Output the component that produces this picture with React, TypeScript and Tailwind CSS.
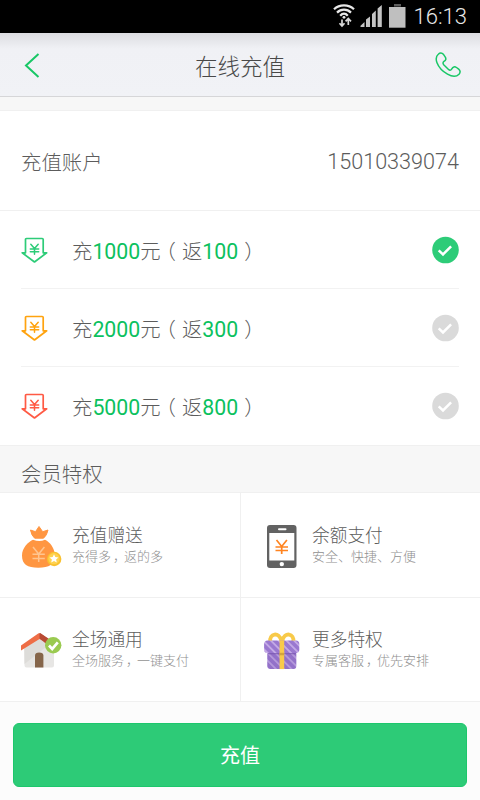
import type { ReactNode } from 'react';

interface Plan {
  amount: string;
  bonus: string;
  color: string;
}

const plans: Plan[] = [
  { amount: '1000', bonus: '100', color: '#2dcc78' },
  { amount: '2000', bonus: '300', color: '#ffa30f' },
  { amount: '5000', bonus: '800', color: '#ff5a44' },
];

// Full-width comma, centred in its cell
const Comma = () => <span className="pr-[4.500px] pl-[2px] [font-feature-settings:'halt']">，</span>;

const Amount = ({ children }: { children: ReactNode }) => (
  <span className="font-[Roboto,sans-serif] text-[21.3px] font-normal text-[#0bc15e]">{children}</span>
);

const StatusBar = () => (
  <div className="flex h-[33px] items-center justify-end bg-black pr-[13px]">
    <svg width="78" height="33" viewBox="330 0 78 33" fill="none">
      <g stroke="#e8e8e8" strokeWidth="2.200">
        <path d="M334 9.200C339.500 4 348.500 4 354 9.200" />
        <path d="M337 12.600C341 8.600 347 8.600 351 12.600" />
        <path d="M340.200 15.700C342.600 13 345.400 13 347.800 15.700" />
      </g>
      <circle cx="344" cy="17.300" r="1.400" fill="#e8e8e8" />
      <path d="M342 19.500v6.500M339.500 23.200l2.500 2.800 2.500-2.800M348.300 25v-6.500M345.600 21.300l2.700-2.800 2.700 2.800" stroke="#d8d8d8" strokeWidth="1.700" />
      <path d="M360.500 27v-1.200L364.500 22v5zM366 27v-7.500l4-3V27zM372 27V14l3.800-3.500V27zM377.600 27V8.600l4.200-3.500V27z" fill="#c4c4c4" />
      <path d="M394 4h7v2.500h-7z" fill="#5c5c5c" />
      <path d="M389 7h16.500v20.700H389z" fill="#bfbfbf" />
    </svg>
    <span className="ml-[6px] font-[Roboto,sans-serif] text-[22px] font-light leading-[33px] text-[#e8e8e8]">16:13</span>
  </div>
);

const RechargeIcon = ({ color }: { color: string }) => (
  <svg width="27" height="27" viewBox="0 0 27 27" fill="none" stroke={color} strokeLinejoin="round" strokeLinecap="round">
    <path d="M4.500 15.800V2.500q0-1 1-1h15.700q1 0 1 1v13.300h3.500L13.500 25 1.200 15.800z" strokeWidth="1.700" />
    <path d="M9.800 7.200l3.700 4.400 3.700-4.400M9.300 12h8.400M9.300 14.800h8.400M13.500 12v5.200" strokeWidth="1.500" />
  </svg>
);

const CheckCircle = ({ active }: { active: boolean }) => (
  <svg width="28" height="28" viewBox="0 0 28 28" fill="none">
    <circle cx="14.500" cy="14" r="13.300" fill={active ? '#2dcc78' : '#dadada'} />
    <path d="M7.700 14.300l4.300 4.100 8.100-8.100" stroke="#fff" strokeWidth="2.500" />
  </svg>
);

const MoneyBagIcon = () => (
  <svg width="42" height="44" viewBox="0 0 42 44">
    <path d="M9.500 5l5 1.700L18 1.500l3.700 5.200L27 5q-1.200 5.700-4.500 8.200h-8.800Q10.500 10.700 9.500 5z" fill="#ff9641" stroke="#ff9641" strokeLinejoin="round" />
    <path d="M12 14.700q6.500 2.500 12 0c5 2.300 9.800 8.500 9.800 15.800 0 9-5.500 12.200-16.500 12.200S1 39.500 1 30.500c0-7.300 5.800-13.500 11-15.800z" fill="#ff9641" />
    <path d="M12 22l5.700 7 5.700-7M11.500 29.300h12.300M11.500 33.500h12.300M17.700 29v8" fill="none" stroke="#ffc58f" strokeWidth="1.500" />
    <circle cx="33.200" cy="34" r="7.200" fill="#f9c12f" />
    <circle cx="33" cy="33.700" r="5.600" fill="#ffd24f" />
    <path d="M33 29.200l1.300 2.900 3.200.3-2.400 2.100.7 3.100-2.800-1.600-2.800 1.600.7-3.100-2.400-2.100 3.200-.3z" fill="#fff" />
  </svg>
);

const PhonePayIcon = () => (
  <svg width="42" height="44" viewBox="0 .5 42 44">
    <rect x="6" y=".5" width="29.500" height="43" rx="3" fill="#626262" />
    <path d="M8.300 8.500h25V36h-25z" fill="#fff" />
    <rect x="17" y="3.800" width="8.500" height="2" rx="1" fill="#fff" />
    <circle cx="20.800" cy="39.600" r="2.200" fill="#fff" />
    <path d="M15.500 15.500l5.200 6.500 5.200-6.500M14.500 22.500h12.500M14.500 26h12.500M20.700 22v7.500" fill="none" stroke="#ff8420" strokeWidth="1.700" />
  </svg>
);

const HouseIcon = () => (
  <svg width="42" height="44" viewBox="0 0 42 44">
    <path d="M3 19L18.500 7 33 18v18.500q0 2-2 2H5.500q-2 0-2-2z" fill="#e7e6e4" />
    <path d="M3.500 19L18.500 8l9 8L3.500 35z" fill="#dddcd9" />
    <path d="M18.500 6.500L37 21v-5L19.200 4z" fill="#b94a34" />
    <path d="M0 16.500V21.500L18.500 10l5 2.500-5-8.500q-.7 0-1.300.6z" fill="#ee6d46" />
    <path d="M18.500 4v5.500L28 17l3-4.500z" fill="#b94a34" />
    <path d="M14 38.500V26.500q0-3 4.200-3t4.200 3v12z" fill="#85654a" />
    <circle cx="32.200" cy="16.200" r="8.200" fill="#9aca50" />
    <path d="M28 16.500l3.200 3.400 5.600-6.500" fill="none" stroke="#fff" strokeWidth="2.700" />
  </svg>
);

const GiftIcon = () => (
  <svg width="42" height="44" viewBox=".2 -2.800 42 44">
    <defs>
      <pattern id="ribbon" width="5.500" height="5.500" patternUnits="userSpaceOnUse" patternTransform="rotate(-45)">
        <path d="M0 0h5.500v5.500H0z" fill="#9a78d0" />
        <path d="M0 0h1.800v5.500H0z" fill="#c4aae6" />
      </pattern>
    </defs>
    <g fill="none" stroke="#f8ca49" strokeWidth="3.800">
      <path d="M9.500 10C8 1.500 18.500-.5 20.500 9" />
      <path d="M21.500 9C23.500-.5 34 1.500 32.500 10" />
    </g>
    <rect x="6.500" y="19" width="29" height="18.300" rx="3" fill="url(#ribbon)" />
    <rect x="6.500" y="19" width="29" height="18.300" rx="3" fill="#7654ad" opacity=".2" />
    <path d="M7 20h28v2.500H7z" fill="#7654ad" opacity=".65" />
    <rect x="3.300" y="8.700" width="35.200" height="12.500" rx="3.500" fill="url(#ribbon)" />
    <path d="M18.800 8.500h4.600V37.300h-4.600z" fill="#f9ca4a" />
    <path d="M18.800 21h4.600v2.500h-4.600z" fill="#d3a33c" />
  </svg>
);

const benefits = [
  { title: '充值赠送', detail: <>充得多<Comma />返的多</>, icon: <MoneyBagIcon /> },
  { title: '余额支付', detail: <>安全、快捷、方便</>, icon: <PhonePayIcon /> },
  { title: '全场通用', detail: <>全场服务<Comma />一键支付</>, icon: <HouseIcon /> },
  { title: '更多特权', detail: <>专属客服<Comma />优先安排</>, icon: <GiftIcon /> },
];

export default function App() {
  return (
    <div
      lang="zh-CN"
      className="flex h-[800px] w-[480px] flex-col overflow-hidden bg-[#fcfcfc] font-['Noto_Sans_CJK_SC',sans-serif] font-light text-[#5c5c5c]"
    >
      <StatusBar />

      <header className="flex h-16 items-center justify-between border-b border-[#d6d6d8] bg-linear-to-b from-[#dcdde1] via-[#f0f1f5] via-25% to-[#f1f2f6] pr-[18px] pl-[24px]">
        <svg width="22" height="30" viewBox="0 0 22 30" fill="none">
          <path d="M14.500 4L2 15.500 14.500 27" stroke="#18c766" strokeWidth="2" />
        </svg>
        <h1 className="pt-px text-[22.5px] leading-none text-[#484848]">在线充值</h1>
        <svg width="28" height="28" viewBox="0 0 28 28" fill="none" stroke="#18c766" strokeWidth="1.500" strokeLinejoin="round">
          <path d="M4.300 3.200C6 1.500 8 1.600 9.300 3.200L11.300 6.200C12.400 8 11.700 9.400 10.300 10.200 8.800 11.300 8.600 12.300 9.700 13.700L14.800 18.700C16 19.700 17 19.200 17.800 17.800 19 15.700 20.700 15.300 22.500 16.500L24.700 18.200C26.500 19.700 26.500 21.500 25 23.200 22.300 26 17.800 25.600 13.500 23.200 8.500 20.400 4.700 16.300 3 11.800 1.600 8 2 5.200 4.300 3.200Z" />
        </svg>
      </header>

      <div className="h-[13px] bg-[#f7f7f7]" />

      <section className="flex h-[101px] items-center justify-between border-y border-[#f0f0f0] bg-white px-[21px]">
        <span className="pt-0.5 text-[20.4px]">充值账户</span>
        <span className="pt-[3px] font-[Roboto,sans-serif] text-[21.6px] font-light">15010339074</span>
      </section>

      <section className="h-[234px] bg-white px-[21px]">
        {plans.map((plan, index) => (
          <div key={plan.amount} className="flex h-[78px] items-center border-b border-[#f2f2f2] pt-px last:border-transparent">
            <RechargeIcon color={plan.color} />
            <p className="ml-6 flex-1 pt-px text-[20.4px] leading-8">
              充<Amount>{plan.amount}</Amount>元
              <span className="pr-[6px] pl-[5px] [font-feature-settings:'halt']">（</span>返
              <Amount>{plan.bonus}</Amount>
              <span className="pl-[6px] [font-feature-settings:'halt']">）</span>
            </p>
            <CheckCircle active={index === 0} />
          </div>
        ))}
      </section>

      <h2 className="flex h-12 items-center border-y border-[#f0f0f0] bg-[#f7f7f7] px-[21px] pt-2 text-[20.4px]">会员特权</h2>

      <section className="grid grid-cols-2 bg-white">
        {benefits.map((item) => (
          <div key={item.title} className="flex h-[104.5px] items-center border-b border-l border-[#f0f0f0] pl-[21px] odd:border-l-0 even:pl-5">
            <div className="w-[51px] pt-1">{item.icon}</div>
            <div className="pb-px">
              <h3 className="mb-px text-[17.7px] leading-[22px]">{item.title}</h3>
              <p className="text-[13px] leading-5 text-[#8f8f8f]">{item.detail}</p>
            </div>
          </div>
        ))}
      </section>

      <footer className="px-[13px] pt-[21px]">
        <button className="h-16 w-full rounded-md border border-[#1dc76c] bg-[#2dcb77] text-[20px] font-normal text-white">充值</button>
      </footer>
    </div>
  );
}
